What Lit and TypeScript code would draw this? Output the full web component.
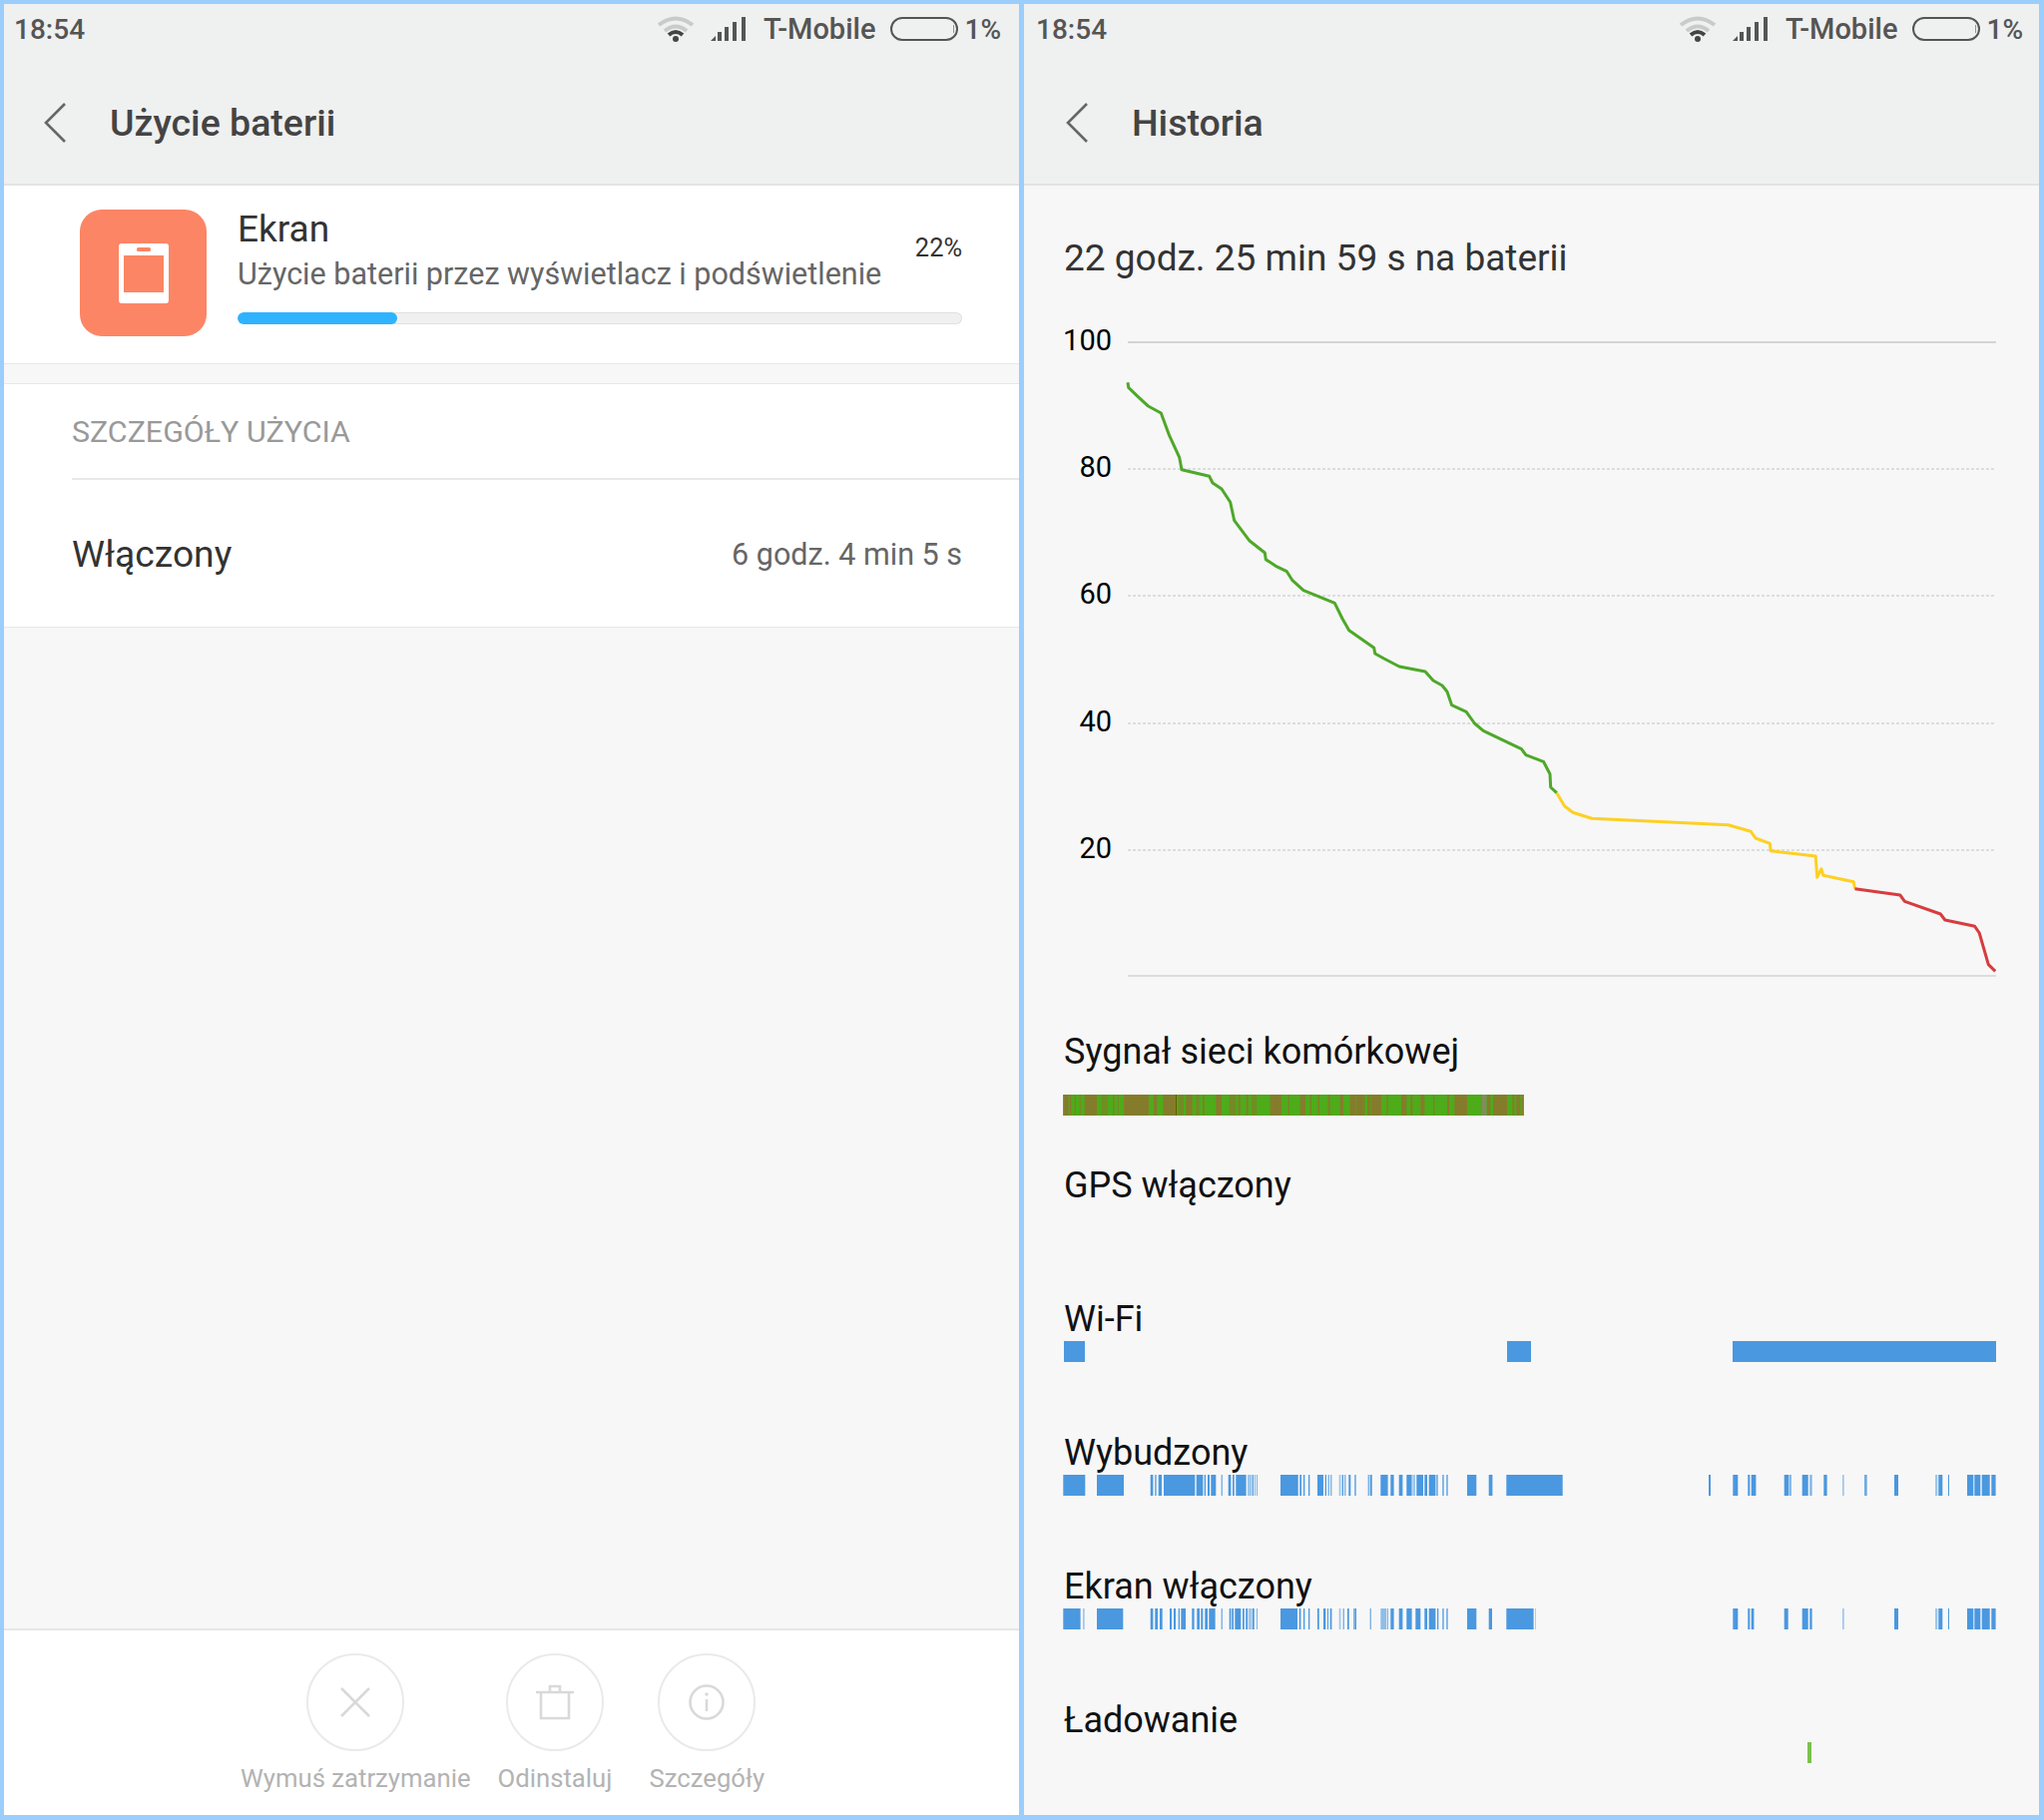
import { LitElement, html, css, svg } from "lit";
import { customElement } from "lit/decorators.js";

type Seg = [number, number, number?];

const z7 = (a: Seg[]) => a.map(([s, e, o]) => [1050 + s / 3 - 1065, (e - s) / 3, o ?? 1] as Seg);
const z8 = (a: Seg[]) => a.map(([s, e, o]) => [1540 + s / 3 - 1065, (e - s) / 3, o ?? 1] as Seg);

const WIFI: Seg[] = [[1, 21], [445, 24], [671, 264]];
const WAKE: Seg[] = [
  ...z7([[46,112],[147,228],[308,316],[322,326],[332,342],[348,442],[446,466],[470,474],[480,486],[490,505],[521,524],[542,550],[555,560],[565,596],[600,612,.5],[614,618],[622,624],[628,630],[699,752],[757,762],[768,772],[783,787],[810,828],[833,837],[842,845],[850,853],[875,880,.5],[884,888],[892,895],[904,910],[922,926],[962,965],[968,974],[1000,1022],[1030,1040],[1055,1066],[1078,1094],[1096,1104,.5],[1108,1128],[1132,1140],[1145,1165],[1168,1172],[1186,1190],[1198,1202],[1260,1288],[1325,1336],[1378,1500]]),
  ...z8([[0,77],[516,522],[589,604],[634,640],[644,658],[743,757],[760,764],[797,815],[820,827,.7],[862,872],[918,923,.5],[984,992,.8],[1074,1086],[1197,1204,.5],[1207,1219],[1236,1239],[1293,1312],[1315,1333],[1337,1361],[1366,1379]]),
];
const SCREEN: Seg[] = [
  ...z7([[46,98],[105,110,.5],[147,226],[308,316],[322,330],[336,344],[366,372],[378,384],[392,396],[400,414],[433,440],[448,456],[460,466],[472,480],[484,503],[521,524],[545,550],[553,558],[562,580],[585,590],[595,600],[602,612,.5],[614,620],[628,630],[699,750],[755,760],[768,772],[783,787],[810,815],[828,835],[840,843],[848,853],[875,880,.5],[887,890],[900,905],[918,920],[922,927],[968,971],[1000,1018,.6],[1020,1022],[1030,1040],[1055,1066],[1078,1094],[1105,1120],[1132,1140],[1145,1165],[1170,1174],[1186,1190],[1198,1202],[1260,1288],[1325,1335],[1378,1460],[1465,1467,.6]]),
  ...z8([[589,604],[634,640],[644,652],[743,755],[797,815],[820,827],[918,923,.5],[1074,1086],[1197,1204,.5],[1207,1219],[1236,1239],[1293,1312],[1315,1333],[1337,1361],[1366,1379]]),
];
const SIGNAL_BROWN: Seg[] = [[46,62],[66,70],[80,84],[95,98],[110,147],[160,180,.6],[196,200],[210,212],[228,303],[318,328],[346,385],[392,408,.7],[415,434],[445,455,.7],[465,470],[505,522],[545,565,.7],[572,578],[596,602],[612,628,.6],[668,702],[722,726],[758,774],[788,792],[812,816],[842,848],[878,888],[908,924],[926,952],[960,970],[972,1002],[1018,1022],[1062,1078],[1090,1096],[1120,1132],[1158,1162],[1200,1206],[1222,1260],[1320,1330],[1338,1380],[1396,1402],[1408,1420],[1425,1430]];

const toPts = (a: number[][], fx: (x: number) => number, fy: (y: number) => number) =>
  a.map(([x, y]) => `${fx(x).toFixed(1)},${fy(y).toFixed(1)}`).join(" ");
const x4 = (x: number) => 1050 + x / 3 - 1026;
const y4 = (y: number) => 320 + y / 3 - 300;
const x5 = (x: number) => 1450 + x / 2.6221 - 1026;
const y5 = (y: number) => 660 + y / 3 - 300;
const real = (a: number[][]) => a.map(([x, y]) => `${x - 1026},${y - 300}`).join(" ");

const GREEN =
  toPts([[240,190],[242,205],[270,232],[300,260],[340,282],[365,350],[395,415],[402,452],[485,472],[495,492],[522,510],[548,550],[560,605],[605,665],[652,702],[655,722],[685,742],[718,758],[735,785],[768,815],[862,853],[885,900],[905,935],[980,988],[983,1005],[1010,1020]], x4, y4) +
  " " + real([[1402,668],[1428,673],[1436,682],[1445,687]]) + " " +
  toPts([[0,100],[12,140],[50,160],[72,195],[95,217],[195,272],[207,290],[253,310],[270,347],[272,387],[288,404]], x5, y5);
const YELLOW = toPts([[288,404],[308,443],[330,463],[380,481],[738,500],[798,520],[810,540],[848,556],[850,578],[968,594],[972,658],[983,632],[988,652],[1068,671],[1071,692]], x5, y5);
const RED = toPts([[1071,692],[1190,711],[1202,730],[1296,768],[1308,786],[1386,805],[1398,825],[1422,920],[1440,940]], x5, y5);

@customElement("app-root")
export class AppRoot extends LitElement {
  static styles = css`
    :host {
      display: block;
      width: 2048px;
      height: 1824px;
      box-sizing: border-box;
      background: #9bcdfd;
      padding: 4px 5px 5px 4px;
      font-family: Roboto, "Noto Sans", sans-serif;
    }
    .page { display: grid; grid-template-columns: 1017px 1017px; column-gap: 5px; height: 1815px; }
    .panel { display: flex; flex-direction: column; background: #f7f7f7; overflow: hidden; }
    .top { background: #eff0f0; border-bottom: 2px solid #e2e3e3; height: 182px; box-sizing: border-box; flex: none; }
    .status { display: flex; align-items: center; height: 38px; padding: 0 18px 0 10px; margin-top: 6px; font-size: 28px; font-weight: 500; color: #555; }
    .p2 .status { padding: 0 16px 0 12px; }
    .time { flex: 1; }
    .wifi { margin-right: 16px; }
    .sig { margin-right: 17px; }
    .carrier { font-size: 29px; }
    .batt { position: relative; width: 68px; height: 24px; box-sizing: border-box; border: 2px solid #555; border-radius: 12px; margin: 0 6px 0 15px; }
    .batt i { position: absolute; right: 2px; top: 6px; width: 1px; height: 8px; background: #e8707a; }
    .bar { display: flex; align-items: center; height: 92px; margin-top: 29px; padding-left: 38px; }
    .p2 .bar { padding-left: 40px; }
    .bar h1 { margin: 0 0 0 44px; font-size: 37.5px; font-weight: 500; color: #444; line-height: 44px; }

    .app { background: #fff; height: 179px; box-sizing: border-box; border-bottom: 1px solid #e8e8e8; display: flex; padding: 24px 57px 0 76px; gap: 31px; flex: none; }
    .icon { width: 127px; height: 127px; flex: none; background: #fc8565; border-radius: 22px; display: flex; align-items: center; justify-content: center; }
    .info { flex: 1; }
    .rowline { display: flex; justify-content: space-between; align-items: flex-start; margin-top: -1px; }
    .name { font-size: 37px; line-height: 42px; color: #333; }
    .pct { font-size: 25.4px; line-height: 30px; color: #333; margin-top: 24px; }
    .desc { font-size: 30.5px; line-height: 36px; color: #666; margin-top: -6px; white-space: nowrap; }
    .track { height: 12px; border-radius: 6px; background: #f0f0f0; box-shadow: inset 0 0 0 1px #e0e0e0; margin-top: 20px; overflow: hidden; }
    .fill { height: 100%; background: #2fb3ff; border-radius: 6px; }

    .details { margin-top: 19px; background: #fff; border-top: 1px solid #e8e8e8; border-bottom: 1px solid #e8e8e8; padding-left: 68px; flex: none; height: 245px; box-sizing: border-box; }
    .dh { height: 96px; box-sizing: border-box; border-bottom: 2px solid #e8e8e8; font-size: 30.4px; line-height: 34px; color: #999; padding-top: 31px; }
    .dr { display: flex; justify-content: space-between; align-items: center; padding: 52px 57px 0 0; }
    .dr b { font-weight: 400; font-size: 37.2px; color: #333; }
    .dr span { font-size: 30.5px; color: #666; }

    .spacer { flex: 1; }
    .foot { flex: none; height: 187px; box-sizing: border-box; background: #fff; border-top: 2px solid #e6e6e6; display: flex; padding: 23px 0 0 237px; }
    .act { display: flex; flex-direction: column; align-items: center; }
    .act + .act { margin-left: 27px; }
    .act:last-child { width: 140px; margin-left: 25px; }
    .circle { width: 98px; height: 98px; box-sizing: border-box; border: 2px solid #eaeaea; border-radius: 50%; display: flex; align-items: center; justify-content: center; }
    .act span { font-size: 25.7px; line-height: 30px; color: #b3b3b3; margin-top: 12px; white-space: nowrap; }

    .hist { flex: 1; padding: 0 0 0 40px; }
    .total { font-size: 37px; line-height: 42px; color: #333; margin-top: 52px; }
    .chart { display: block; margin: 20px 0 33px -40px; }
    .chart text { font-size: 29px; fill: #000; text-anchor: end; font-family: Roboto, sans-serif; }
    .row { height: 134px; }
    .row h2 { margin: 0; font-weight: 400; font-size: 36px; line-height: 42px; color: #111; height: 43px; }
    .row svg { display: block; margin-left: -1px; }
    .row .sigbar { margin-top: 21px; }
  `;

  private back() {
    return html`<svg width="24" height="40" viewBox="0 0 24 40"><path d="M23 1 L4 20 L23 39" fill="none" stroke="#666" stroke-width="2.6"/></svg>`;
  }

  private status() {
    return html`<div class="status">
      <span class="time">18:54</span>
      <svg class="wifi" width="38" height="26" viewBox="0 0 38 26">
        <path d="M2 9 Q19 -4 36 9" fill="none" stroke="#c9caca" stroke-width="4"/>
        <path d="M8 15 Q19 6 30 15" fill="none" stroke="#c9caca" stroke-width="4"/>
        <path d="M12 19 Q19 13 26 19" fill="none" stroke="#444" stroke-width="4"/>
        <circle cx="19" cy="23" r="3" fill="#444"/>
      </svg>
      <svg class="sig" width="36" height="24" viewBox="0 0 36 24">
        <path d="M0 24 L5 19 V24 Z" fill="#555"/>
        <rect x="7" y="15" width="4" height="9" fill="#555"/>
        <rect x="14" y="10" width="4" height="14" fill="#555"/>
        <rect x="22" y="5" width="4" height="19" fill="#555"/>
        <rect x="31" y="0" width="4" height="24" fill="#555"/>
      </svg>
      <span class="carrier">T-Mobile</span>
      <div class="batt"><i></i></div>
      <span>1%</span>
    </div>`;
  }

  private bars(data: Seg[], color = "#4a98e0") {
    return html`<svg width="936" height="21" viewBox="0 0 936 21">
      ${data.map(([x, w, o]) => svg`<rect x=${x.toFixed(1)} y="0" width=${w.toFixed(1)} height="21" fill=${color} opacity=${o ?? 1}/>`)}
    </svg>`;
  }

  private signal() {
    const b = SIGNAL_BROWN.map(([s, e, o]) => [s / 3 - 15, (e - s) / 3, o ?? 1] as Seg);
    return html`<svg class="sigbar" width="936" height="21" viewBox="0 0 936 21">
      <rect x="0.3" y="0" width="461.4" height="21" fill="#4eab1a"/>
      ${b.map(([x, w, o]) => svg`<rect x=${x.toFixed(1)} y="0" width=${w.toFixed(1)} height="21" fill="#857c2b" opacity=${o ?? 1}/>`)}
      <rect x="113" y="0" width="1" height="21" fill="#6a5a00"/>
      <rect x="420" y="0" width="4.5" height="21" fill="#858a60"/>
    </svg>`;
  }

  private chart() {
    const ys = [43, 170, 297, 425, 552, 678];
    const labels = ["100", "80", "60", "40", "20"];
    return html`<svg class="chart" width="1017" height="700" viewBox="0 0 1017 700">
      ${labels.map((l, i) => svg`<text x="88" y=${ys[i] + 8}>${l}</text>`)}
      <line x1="104" x2="974" y1=${ys[0]} y2=${ys[0]} stroke="#c8c8c8" stroke-width="1.5"/>
      ${[1, 2, 3, 4].map((i) => svg`<line x1="104" x2="974" y1=${ys[i]} y2=${ys[i]} stroke="#c4c4c4" stroke-width="1.2" stroke-dasharray="3 2"/>`)}
      <line x1="104" x2="974" y1=${ys[5]} y2=${ys[5]} stroke="#d4d4d4" stroke-width="1.5"/>
      <g fill="none" stroke-width="3" stroke-linejoin="round">
        <polyline points=${GREEN} stroke="#4ea82a"/>
        <polyline points=${YELLOW} stroke="#fdd023"/>
        <polyline points=${RED} stroke="#d63c3e"/>
      </g>
    </svg>`;
  }

  render() {
    return html`<div class="page">
      <section class="panel">
        <div class="top">${this.status()}
          <div class="bar">${this.back()}<h1>Użycie baterii</h1></div>
        </div>
        <div class="app">
          <div class="icon">
            <svg width="50" height="60" viewBox="0 0 50 60">
              <rect width="50" height="60" rx="3" fill="#fff"/>
              <rect x="5" y="12" width="40" height="37" fill="#fc8565"/>
              <rect x="18" y="4" width="14" height="4" rx="1.5" fill="#fc8565"/>
            </svg>
          </div>
          <div class="info">
            <div class="rowline"><span class="name">Ekran</span><span class="pct">22%</span></div>
            <div class="desc">Użycie baterii przez wyświetlacz i podświetlenie</div>
            <div class="track"><div class="fill" style="width:22%"></div></div>
          </div>
        </div>
        <div class="details">
          <div class="dh">SZCZEGÓŁY UŻYCIA</div>
          <div class="dr"><b>Włączony</b><span>6 godz. 4 min 5 s</span></div>
        </div>
        <div class="spacer"></div>
        <div class="foot">
          <div class="act">
            <div class="circle"><svg width="32" height="34" viewBox="0 0 32 34"><path d="M2 3 L30 31 M30 3 L2 31" stroke="#d9d9d9" stroke-width="2.6" fill="none"/></svg></div>
            <span>Wymuś zatrzymanie</span>
          </div>
          <div class="act">
            <div class="circle"><svg width="38" height="36" viewBox="0 0 38 36"><path d="M0 8 H38 M5 8 V34 H33 V8 M14 8 V2 H24 V8" stroke="#d9d9d9" stroke-width="2.6" fill="none"/></svg></div>
            <span>Odinstaluj</span>
          </div>
          <div class="act">
            <div class="circle"><svg width="36" height="36" viewBox="0 0 36 36"><circle cx="18" cy="18" r="16.5" stroke="#d9d9d9" stroke-width="2.6" fill="none"/><path d="M18 15 V27" stroke="#d9d9d9" stroke-width="2.6"/><circle cx="18" cy="10" r="1.8" fill="#d9d9d9"/></svg></div>
            <span>Szczegóły</span>
          </div>
        </div>
      </section>
      <section class="panel p2">
        <div class="top">${this.status()}
          <div class="bar">${this.back()}<h1>Historia</h1></div>
        </div>
        <div class="hist">
          <div class="total">22 godz. 25 min 59 s na baterii</div>
          ${this.chart()}
          <div class="row"><h2>Sygnał sieci komórkowej</h2>${this.signal()}</div>
          <div class="row"><h2>GPS włączony</h2></div>
          <div class="row"><h2>Wi-Fi</h2>${this.bars(WIFI)}</div>
          <div class="row"><h2>Wybudzony</h2>${this.bars(WAKE)}</div>
          <div class="row"><h2>Ekran włączony</h2>${this.bars(SCREEN)}</div>
          <div class="row"><h2>Ładowanie</h2>${this.bars([[746, 4]], "#7ac24d")}</div>
        </div>
      </section>
    </div>`;
  }
}
